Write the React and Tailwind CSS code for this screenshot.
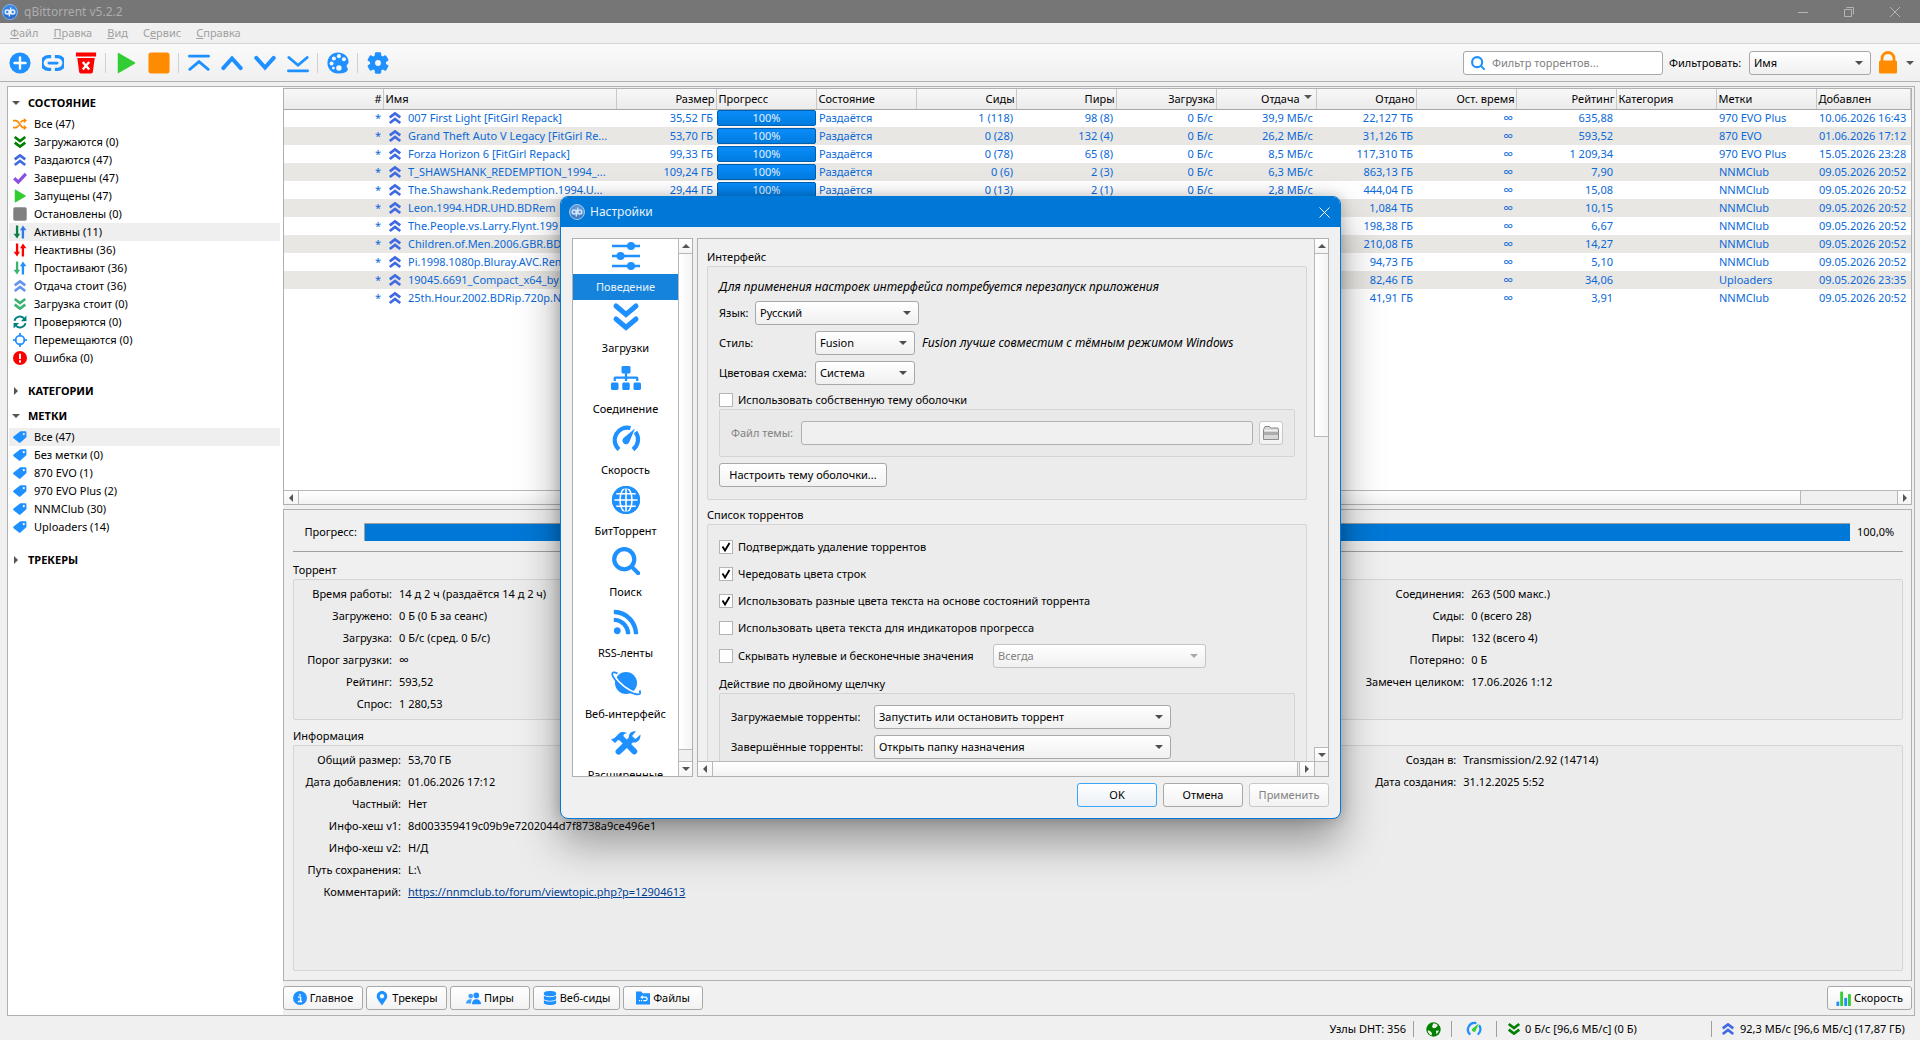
import React from 'react';
import { FaSitemap, FaRss, FaMapMarkerAlt, FaDatabase } from 'react-icons/fa';

const BLUE = '#1e90ff';

/* ---------- icons ---------- */

function Svg({ size = 14, box = 24, className = '', children, ...rest }) {
  return (
    <svg width={size} height={size} viewBox={`0 0 ${box} ${box}`} className={`flex-none ${className}`} fill="none" aria-hidden="true" {...rest}>
      {children}
    </svg>
  );
}

function Logo({ size = 16, pale = false }) {
  return (
    <Svg size={size} box={32}>
      <circle cx="16" cy="16" r="15" fill={pale ? '#5c97da' : '#3b86e0'} stroke={pale ? '#a9c8ec' : '#7fb2ee'} strokeWidth="2" />
      <path d="M3 20a13.5 13.5 0 0 0 26 0c-6 3-18 3-26 0Z" fill={pale ? '#4381c8' : '#2f6fc8'} />
      <g stroke={pale ? '#d3e3f6' : '#e6f0fb'} strokeWidth="2.8">
        <circle cx="10.5" cy="16" r="4" />
        <path d="M14.7 11.5V25" />
        <circle cx="21.5" cy="16" r="4" />
        <path d="M17.4 7v13.5" />
      </g>
    </Svg>
  );
}

const Double = ({ color, down, size = 14 }) => (
  <Svg size={size}>
    <path
      d={down ? 'M3 3.5l9 7 9-7M3 13l9 7 9-7' : 'M3 11l9-7 9 7M3 20.500l9-7 9 7'}
      stroke={color}
      strokeWidth="4.6"
      strokeLinejoin="miter"
    />
  </Svg>
);

const Arrows = ({ down, up }) => (
  <Svg>
    <path d="M5 1h4v14h3L7 23 1 15h4z" fill={down} />
    <path d="M15 23h4V9h4L17 1l-5 8h3z" fill={up} />
  </Svg>
);

const Tag = () => (
  <Svg>
    <path d="M13.500 2H21a2 2 0 0 1 2 2v7.500a2 2 0 0 1-.7 1.500l-9.500 8.300a2 2 0 0 1-2.700 0L1 14a1.800 1.800 0 0 1 0-2.700L12 2.600a2 2 0 0 1 1.500-.6ZM18.500 5a1.900 1.900 0 1 0 0 3.800 1.900 1.900 0 0 0 0-3.800Z" fill={BLUE} fillRule="evenodd" />
  </Svg>
);

const Play = ({ size = 14 }) => (
  <Svg size={size}>
    <path d="M3 1.500v21a.6.6 0 0 0 1 .5l17.500-10.200a.9.9 0 0 0 0-1.600L4 1a.7.7 0 0 0-1 .5Z" fill="#32cd32" />
  </Svg>
);

const Stop = ({ size = 14, color }) => (
  <Svg size={size}>
    <rect x="0.500" y="0.500" width="23" height="23" rx="3" fill={color} />
  </Svg>
);

const Shuffle = () => (
  <Svg>
    <path d="M0 6h5c6 0 7 12 13 12h2M0 18h5c2 0 3.500-1.500 5-4M13 9c1.500-2 3-3 5-3h2" stroke="#ff8c00" strokeWidth="3" />
    <path d="M18.500 1.500 24 6l-5.500 4.500zM18.500 13.500 24 18l-5.500 4.500z" fill="#ff8c00" />
  </Svg>
);

const Check = () => (
  <Svg>
    <path d="M2 12.500l7 6.500L22 5" stroke="#8a4fe0" strokeWidth="5.500" />
  </Svg>
);

const Recheck = () => (
  <Svg>
    <path d="M2.500 10A9.500 9.500 0 0 1 19.500 6.500M21.500 14A9.500 9.500 0 0 1 4.500 17.500" stroke="#008080" strokeWidth="3.200" />
    <path d="M23 1v9.500h-9.500zM1 23v-9.500h9.500z" fill="#008080" />
  </Svg>
);

const Target = () => (
  <Svg>
    <circle cx="12" cy="12" r="7.500" stroke={BLUE} strokeWidth="3" />
    <path d="M12 0v6M12 18v6M0 12h6M18 12h6" stroke={BLUE} strokeWidth="3" />
  </Svg>
);

const ErrorIcon = () => (
  <Svg>
    <circle cx="12" cy="12" r="12" fill="#ff0000" />
    <path d="M12 4.500v9M12 16v3.500" stroke="#fff" strokeWidth="3.400" />
  </Svg>
);

const PlusIcon = () => (
  <Svg size={22}>
    <circle cx="12" cy="12" r="11.500" fill={BLUE} />
    <path d="M12 6v12M6 12h12" stroke="#fff" strokeWidth="2.600" strokeLinecap="round" />
  </Svg>
);

const LinkIcon = () => (
  <Svg size={22}>
    <path d="M10 5H7a7 7 0 0 0 0 14h3M14 5h3a7 7 0 0 1 0 14h-3" stroke={BLUE} strokeWidth="3.600" />
    <path d="M7.500 12h9" stroke={BLUE} strokeWidth="3" strokeLinecap="round" />
  </Svg>
);

const TrashIcon = () => (
  <Svg size={22}>
    <path d="M1 .5h22V5H1zM2.500 6.500h19l-2 15a2 2 0 0 1-2 2h-11a2 2 0 0 1-2-2z" fill="#f00" />
    <path d="M8.500 11l7 8M15.500 11l-7 8" stroke="#fff" strokeWidth="2.600" />
  </Svg>
);

const TopIcon = () => (
  <Svg size={22}>
    <path d="M1.500 4.500h21M2 19l10-8.500L22 19" stroke={BLUE} strokeWidth="3" strokeLinecap="round" />
  </Svg>
);
const UpIcon = () => (
  <Svg size={22}>
    <path d="M2.500 17.500L12 7l9.500 10.500" stroke={BLUE} strokeWidth="4.400" strokeLinecap="round" />
  </Svg>
);
const DownIcon = () => (
  <Svg size={22}>
    <path d="M2.500 6.500L12 17l9.500-10.500" stroke={BLUE} strokeWidth="4.400" strokeLinecap="round" />
  </Svg>
);
const BottomIcon = () => (
  <Svg size={22}>
    <path d="M1.500 20.500h21M2 6l10 8.500L22 6" stroke={BLUE} strokeWidth="3" strokeLinecap="round" />
  </Svg>
);

const PaletteIcon = () => (
  <Svg size={22}>
    <path
      d="M12 .5C5.500.5.500 5.500.500 12S5.500 23.500 12 23.500c4 0 8.500-.3 10.500-3.500 1.200-2-1.500-3-1-5 .3-1.500 2-1.800 2-4C23.500 4.500 18 .5 12 .5Z"
      fill={BLUE}
    />
    <g fill="#f6f6f6">
      <circle cx="5" cy="12.500" r="2.200" />
      <circle cx="7.500" cy="7" r="2.200" />
      <circle cx="13" cy="4.500" r="2.200" />
      <circle cx="18.500" cy="8" r="2.200" />
      <circle cx="13" cy="17.500" r="3" />
      <circle cx="7" cy="17.500" r="1.500" />
    </g>
  </Svg>
);

const GearIcon = () => (
  <Svg size={22}>
    <g fill={BLUE}>
      {[0, 60, 120].map((a) => (
        <rect key={a} x="8.500" y="0.300" width="7" height="23.400" rx="1.500" transform={`rotate(${a} 12 12)`} />
      ))}
      <circle cx="12" cy="12" r="8.800" />
    </g>
    <circle cx="12" cy="12" r="3.200" fill="#f6f6f6" />
  </Svg>
);

const SearchIcon = ({ size }) => (
  <Svg size={size}>
    <circle cx="10.500" cy="10.500" r="8.600" stroke={BLUE} strokeWidth="3.600" />
    <path d="M17 17l5.500 5.500" stroke={BLUE} strokeWidth="3.400" strokeLinecap="round" />
  </Svg>
);

const LockIcon = () => (
  <svg width="18" height="23" viewBox="0 0 18 23" fill="none" className="flex-none" aria-hidden="true">
    <path d="M3 11V7.500a6 6 0 0 1 12 0V11" stroke="#ff8c00" strokeWidth="2.800" />
    <rect y="9.500" width="18" height="13" rx="1.500" fill="#ff8c00" />
  </svg>
);

const SlidersIcon = () => (
  <Svg size={30} box={30}>
    <path d="M1 5h28M1 15h28M1 25h28" stroke={BLUE} strokeWidth="2.400" />
    <circle cx="20" cy="5" r="4" fill={BLUE} />
    <circle cx="9.500" cy="15" r="4" fill={BLUE} />
    <circle cx="20" cy="25" r="4" fill={BLUE} />
  </Svg>
);

const DownloadsIcon = () => (
  <Svg size={30} box={30}>
    <path d="M5 4l10 8.500L25 4M5 17l10 8.500L25 17" stroke={BLUE} strokeWidth="5" strokeLinecap="round" />
  </Svg>
);

const GaugeIcon = ({ size = 30, needle = BLUE }) => (
  <Svg size={size} box={30}>
    <path d="M8 25.500A12.500 12.500 0 0 1 19.500 4M24.500 8A12.500 12.500 0 0 1 22 25.500" stroke={BLUE} strokeWidth="4.200" />
    <path d="M24 4.500l-5.500 13a3.600 3.600 0 1 1-6-3.500z" fill={needle} />
  </Svg>
);

const GlobeIcon = () => (
  <Svg size={30} box={30}>
    <circle cx="15" cy="15" r="14" fill={BLUE} />
    <g stroke="#fff" strokeWidth="1.600">
      <ellipse cx="15" cy="15" rx="6" ry="12" />
      <path d="M15 2.500v25M2.500 15h25M5 8.800h20M5 21.200h20" />
    </g>
    <circle cx="15" cy="15" r="12.800" stroke={BLUE} strokeWidth="2.400" />
  </Svg>
);

const PlanetIcon = () => (
  <Svg size={30} box={30}>
    <circle cx="15" cy="15" r="11" fill={BLUE} />
    <path d="M3 7.500C7 14 15 21.500 27 26" stroke="#fff" strokeWidth="2" />
    <path d="M6.500 5.500C3 3.500.5 4 1.500 7.500 3.500 12.500 13 22.500 24 26c5 1.200 6-.5 4.500-3.500" stroke={BLUE} strokeWidth="1.800" />
  </Svg>
);

const ToolsIcon = () => (
  <Svg size={30} box={30}>
    <path d="M0 10.500l3.500-1.500 5-5C10 2.600 13 2.600 15 3.500l1 .8c-2.500.2-4 1.200-3.500 3l12.800 13a3 3 0 0 1-4.200 4.300L8.800 11.500l-1.800-.5-3 3z" fill={BLUE} />
    <path d="M29.500 5.500l-5 4.500-3.500-3 3.800-4.600c-3.500-.5-7.300 1.600-7 6L5.500 20.500a3 3 0 0 0 4.200 4.300L21.800 13.500c4.400.8 8-2.500 7.700-8z" fill={BLUE} />
  </Svg>
);

const Triangle = ({ dir = 'down', color = '#555555' }) => (
  <svg width="8" height="8" viewBox="0 0 8 8" className="flex-none" aria-hidden="true">
    <path d={{ down: 'M0 2h8L4 6z', up: 'M0 6h8L4 2z', left: 'M6 0v8L2 4z', right: 'M2 0v8l4-4z' }[dir]} fill={color} />
  </svg>
);

const InfoIcon = () => (
  <Svg>
    <circle cx="12" cy="12" r="12" fill={BLUE} />
    <path d="M12 5v3M8.500 10.500H13V18M8.500 18h7" stroke="#fff" strokeWidth="2.400" />
  </Svg>
);

const PeersIcon = () => (
  <Svg size={15}>
    <g fill={BLUE}>
      <circle cx="7.500" cy="8" r="3.800" opacity="0.850" />
      <circle cx="16.500" cy="7" r="4.500" />
      <path d="M0 20c0-4.500 3-7 7-7 1 0 1.800.2 2.500.5C8.500 15 8 17 8 20z" opacity="0.850" />
      <path d="M9.500 21c0-5.500 3-8 7-8s7.500 2.500 7.500 8z" />
    </g>
  </Svg>
);

const FolderIcon = () => (
  <Svg>
    <path d="M0 1h9l2.500 3H24v19H0z" fill={BLUE} />
    <path d="M7 16.500H5M8.500 16.500h2M12.500 16.500H16a3 3 0 0 0 0-6H9.500" stroke="#fff" strokeWidth="2.200" />
    <path d="M11.500 7v7L7.500 10.500z" fill="#fff" />
  </Svg>
);

const BarsIcon = () => (
  <Svg size={15}>
    <path d="M3 24V17" stroke={BLUE} strokeWidth="4.500" />
    <path d="M9 24V1" stroke="#32cd32" strokeWidth="4.500" />
    <path d="M15.500 24V11" stroke={BLUE} strokeWidth="4.500" />
    <path d="M21.500 24V5" stroke="#32cd32" strokeWidth="4.500" />
  </Svg>
);

const EarthIcon = () => (
  <Svg size={15}>
    <circle cx="12" cy="12" r="11.500" fill="#008000" />
    <path d="M11.500 2.500c2.500-.5 5.500.5 7.500 2.500l-3 4-4 1-2.500-2.500zM2.500 13l4 1.500 3 3-.5 4C5.500 20.500 3 17 2.500 13zM16 14l4.500-.5c-.5 2.500-2 4.500-4 6z" fill="#f0f0f0" />
  </Svg>
);

const OpenFolderIcon = () => (
  <svg width="16" height="14" viewBox="0 0 16 14" aria-hidden="true">
    <path d="M.5 13.500V3.500L2 .5h4.500l1 1.500H15l.5 1.500v10z" fill="#d8d8d8" stroke="#8c8c8c" />
    <path d="M1.500 4.500h13" stroke="#f4f4f4" />
    <path d="M1 6h14v3H1z" fill="#acacac" />
  </svg>
);

/* ---------- controls ---------- */

function Select({ id, label, value, className = '', disabled = false }) {
  return (
    <div className={`relative h-6 ${className}`}>
      <select
        id={id}
        aria-label={label}
        disabled={disabled}
        defaultValue={value}
        className="h-6 w-full appearance-none rounded-[3px] border border-[#a8a8a8] bg-linear-to-b from-white to-[#f0f0f0] pr-5 pl-1 text-black disabled:border-[#c4c4c4] disabled:text-[#828282] disabled:opacity-100"
      >
        <option>{value}</option>
      </select>
      <span className="pointer-events-none absolute inset-y-0 right-2 flex items-center">
        <Triangle color={disabled ? '#a8a8a8' : '#4d4d4d'} />
      </span>
    </div>
  );
}

function Checkbox({ id, label, checked = false, className = '' }) {
  return (
    <div className={`flex items-center gap-[5px] ${className}`}>
      <span className="relative flex size-[14px]">
        <input id={id} type="checkbox" defaultChecked={checked} className="peer size-[14px] appearance-none border border-[#b4b4b4] bg-white" />
        <svg viewBox="0 0 14 14" className="pointer-events-none absolute inset-0 hidden peer-checked:block" fill="none" aria-hidden="true">
          <path d="M3.500 6.500l2.500 4L10.500 3" stroke="#000" strokeWidth="1.800" />
        </svg>
      </span>
      <label htmlFor={id}>{label}</label>
    </div>
  );
}

function PushButton({ children, className = '', primary = false, ...rest }) {
  return (
    <button
      type="button"
      className={`flex h-6 items-center justify-center rounded-[3px] border bg-linear-to-b from-white whitespace-nowrap disabled:border-[#c8c8c8] disabled:text-[#828282] ${
        primary ? 'border-[#3ca5f5] to-[#eaf0f6]' : 'border-[#a8a8a8] to-[#f2f2f2]'
      } ${className}`}
      {...rest}
    >
      {children}
    </button>
  );
}

const ScrollButton = ({ dir, className = '' }) => (
  <button type="button" aria-label={`scroll ${dir}`} className={`flex flex-none items-center justify-center border-[#b8b8b8] bg-linear-to-b from-white to-[#f4f4f4] ${className}`}>
    <Triangle dir={dir} />
  </button>
);

/* ---------- sidebar ---------- */

const STATES = [
  [<Shuffle />, 'Все (47)'],
  [<Double down color="#008000" />, 'Загружаются (0)'],
  [<Double color="#4169e1" />, 'Раздаются (47)'],
  [<Check />, 'Завершены (47)'],
  [<Play />, 'Запущены (47)'],
  [<Stop color="#808080" />, 'Остановлены (0)'],
  [<Arrows down="#0b8043" up="#3079e8" />, 'Активны (11)', true],
  [<Arrows down="#ff0000" up="#ff0000" />, 'Неактивны (36)'],
  [<Arrows down="#3cb371" up="#1e90ff" />, 'Простаивают (36)'],
  [<Double color="#6495ed" />, 'Отдача стоит (36)'],
  [<Double down color="#3cb371" />, 'Загрузка стоит (0)'],
  [<Recheck />, 'Проверяются (0)'],
  [<Target />, 'Перемещаются (0)'],
  [<ErrorIcon />, 'Ошибка (0)'],
];

const TAGS = [
  [<Tag />, 'Все (47)', true],
  [<Tag />, 'Без метки (0)'],
  [<Tag />, '870 EVO (1)'],
  [<Tag />, '970 EVO Plus (2)'],
  [<Tag />, 'NNMClub (30)'],
  [<Tag />, 'Uploaders (14)'],
];

function Section({ title, items = [] }) {
  const open = items.length > 0;
  return (
    <section>
      <h2 className="flex h-6 items-center gap-2 pl-1 font-bold">
        <Triangle dir={open ? 'down' : 'right'} />
        {title}
      </h2>
      {open && (
        <ul className="pb-3">
          {items.map(([icon, text, active]) => (
            <li key={text} className={`ml-px flex h-[18px] items-center gap-[7px] pl-1 ${active ? 'bg-[#efefef]' : ''}`}>
              {icon}
              <span>{text}</span>
            </li>
          ))}
        </ul>
      )}
    </section>
  );
}

/* ---------- torrent table ---------- */

const COLUMNS = [
  ['#', 'w-[99px]', 'r'],
  ['Имя', 'w-[233px]', 'l'],
  ['Размер', 'w-[100px]', 'r'],
  ['Прогресс', 'w-[100px]', 'l'],
  ['Состояние', 'w-[100px]', 'l'],
  ['Сиды', 'w-[100px]', 'r'],
  ['Пиры', 'w-[100px]', 'r'],
  ['Загрузка', 'w-[100px]', 'r'],
  ['Отдача', 'w-[100px]', 'r'],
  ['Отдано', 'w-[100px]', 'r'],
  ['Ост. время', 'w-[100px]', 'r'],
  ['Рейтинг', 'w-[100px]', 'r'],
  ['Категория', 'w-[100px]', 'l'],
  ['Метки', 'w-[100px]', 'l'],
  ['Добавлен', 'w-auto', 'l'],
];

const TORRENTS = [
  ['007 First Light [FitGirl Repack]', '35,52 ГБ', '1 (118)', '98 (8)', '0 Б/с', '39,9 МБ/с', '22,127 ТБ', '635,88', '970 EVO Plus', '10.06.2026 16:43'],
  ['Grand Theft Auto V Legacy [FitGirl Re...', '53,70 ГБ', '0 (28)', '132 (4)', '0 Б/с', '26,2 МБ/с', '31,126 ТБ', '593,52', '870 EVO', '01.06.2026 17:12'],
  ['Forza Horizon 6 [FitGirl Repack]', '99,33 ГБ', '0 (78)', '65 (8)', '0 Б/с', '8,5 МБ/с', '117,310 ТБ', '1 209,34', '970 EVO Plus', '15.05.2026 23:28'],
  ['T_SHAWSHANK_REDEMPTION_1994_...', '109,24 ГБ', '0 (6)', '2 (3)', '0 Б/с', '6,3 МБ/с', '863,13 ГБ', '7,90', 'NNMClub', '09.05.2026 20:52'],
  ['The.Shawshank.Redemption.1994.U...', '29,44 ГБ', '0 (13)', '2 (1)', '0 Б/с', '2,8 МБ/с', '444,04 ГБ', '15,08', 'NNMClub', '09.05.2026 20:52'],
  ['Leon.1994.HDR.UHD.BDRem', '', '', '', '', '', '1,084 ТБ', '10,15', 'NNMClub', '09.05.2026 20:52'],
  ['The.People.vs.Larry.Flynt.199', '', '', '', '', '', '198,38 ГБ', '6,67', 'NNMClub', '09.05.2026 20:52'],
  ['Children.of.Men.2006.GBR.BD', '', '', '', '', '', '210,08 ГБ', '14,27', 'NNMClub', '09.05.2026 20:52'],
  ['Pi.1998.1080p.Bluray.AVC.Rem', '', '', '', '', '', '94,73 ГБ', '5,10', 'NNMClub', '09.05.2026 20:52'],
  ['19045.6691_Compact_x64_by', '', '', '', '', '', '82,46 ГБ', '34,06', 'Uploaders', '09.05.2026 23:35'],
  ['25th.Hour.2002.BDRip.720p.N', '', '', '', '', '', '41,91 ГБ', '3,91', 'NNMClub', '09.05.2026 20:52'],
];

function TorrentTable() {
  return (
    <div className="flex min-h-0 flex-[415_1_0%] flex-col border border-[#b0b0b0] bg-white">
      <div className="min-h-0 flex-1 overflow-hidden">
        <table className="w-full table-fixed border-collapse whitespace-nowrap">
          <thead>
            <tr className="h-5 bg-linear-to-b from-[#f8f8f8] to-[#ebebeb]">
              {COLUMNS.map(([name, width, align]) => (
                <th
                  key={name}
                  className={`${width} border-r border-b border-r-[#c8c8c8] border-b-[#a8a8a8] p-0 font-normal ${align === 'r' ? 'pr-px text-right' : 'pl-[2px] text-left'}`}
                >
                  {name === 'Отдача' ? (
                    <span className="flex justify-end gap-1 pr-[3px]">
                      {name}
                      <span className="pt-0.5">
                        <Triangle />
                      </span>
                    </span>
                  ) : (
                    name
                  )}
                </th>
              ))}
            </tr>
          </thead>
          <tbody className="text-[#0969da]">
            {TORRENTS.map(([name, size, seeds, peers, down, up, sent, ratio, tag, added], i) => (
              <tr key={name} className="h-[18px] even:bg-[#e9e7e3]">
                <td className="p-0 pr-[2px] text-right">*</td>
                <td className="overflow-hidden p-0 pl-[5px]">
                  <span className="flex items-center gap-[6px]">
                    <Double color="#4169e1" />
                    {name}
                  </span>
                </td>
                <td className="p-0 pr-[3px] text-right">{size}</td>
                <td className="p-0 pl-px">
                  {i < 5 && (
                    <span className="flex h-4 items-center justify-center rounded-[2px] border border-[#005fae] bg-linear-to-b from-[#0a8cfa] to-[#007ce0] text-[#e4eefa]">100%</span>
                  )}
                </td>
                <td className="p-0 pl-[3px]">{i < 5 && 'Раздаётся'}</td>
                <td className="p-0 pr-[3px] text-right">{seeds}</td>
                <td className="p-0 pr-[3px] text-right">{peers}</td>
                <td className="p-0 pr-[3px] text-right">{down}</td>
                <td className="p-0 pr-[3px] text-right">{up}</td>
                <td className="p-0 pr-[3px] text-right">{sent}</td>
                <td className="p-0 pr-[3px] text-right text-sm leading-4">∞</td>
                <td className="p-0 pr-[3px] text-right">{ratio}</td>
                <td className="p-0" />
                <td className="p-0 pl-[3px]">{tag}</td>
                <td className="p-0 pl-[3px]">{added}</td>
              </tr>
            ))}
          </tbody>
        </table>
      </div>
      <div className="flex h-[14px] border-t border-[#b8b8b8] bg-[#f0f0f0]">
        <ScrollButton dir="left" className="w-[15px] border-r" />
        <div className="mr-24 flex-1 border-r border-[#b8b8b8] bg-linear-to-b from-white to-[#f2f2f2]" />
        <ScrollButton dir="right" className="w-[14px] border-l" />
      </div>
    </div>
  );
}

/* ---------- torrent details ---------- */

const Fields = ({ rows, labelWidth }) => (
  <dl className="flex flex-col">
    {rows.map(([label, value, href]) => (
      <div key={label} className="flex h-[22px] items-center gap-[7px] whitespace-nowrap">
        <dt className={`${labelWidth} text-right`}>{label}</dt>
        <dd className={value === '∞' ? 'text-sm leading-4' : ''}>
          {href ? (
            <a href={value} className="text-[#003e92] underline">
              {value}
            </a>
          ) : (
            value
          )}
        </dd>
      </div>
    ))}
  </dl>
);

function Details() {
  return (
    <div className="flex min-h-0 flex-[461_1_0%] flex-col border border-[#b0b0b0] pr-2 pb-[9px] pl-[9px]">
      <div className="mt-[13px] flex h-[18px] flex-none items-center">
        <span id="progress-label" className="w-[71px] pr-[7px] text-right">
          Прогресс:
        </span>
        <div role="progressbar" aria-labelledby="progress-label" aria-valuenow={100} className="h-full flex-1 border-t border-l border-[#a0a0a0] bg-[#0078d7]" />
        <span className="w-[53px] pl-[7px]">100,0%</span>
      </div>
      <hr className="mt-[10px] border-t border-[#a0a0a0]" />
      <h3 className="mt-[9px] h-[18px] flex-none leading-[18px]">Торрент</h3>
      <div className="grid flex-none grid-cols-3 rounded-[2px] border border-[#d4d4d4] bg-[#ececec] px-[11px] pt-[3px] pb-1">
        <Fields
          labelWidth="w-[87px]"
          rows={[
            ['Время работы:', '14 д 2 ч (раздаётся 14 д 2 ч)'],
            ['Загружено:', '0 Б (0 Б за сеанс)'],
            ['Загрузка:', '0 Б/с (сред. 0 Б/с)'],
            ['Порог загрузки:', '∞'],
            ['Рейтинг:', '593,52'],
            ['Спрос:', '1 280,53'],
          ]}
        />
        <div />
        <Fields
          labelWidth="w-[102px]"
          rows={[
            ['Соединения:', '263 (500 макс.)'],
            ['Сиды:', '0 (всего 28)'],
            ['Пиры:', '132 (всего 4)'],
            ['Потеряно:', '0 Б'],
            ['Замечен целиком:', '17.06.2026 1:12'],
          ]}
        />
      </div>
      <h3 className="mt-[7px] h-[18px] flex-none leading-[18px]">Информация</h3>
      <div className="grid min-h-0 flex-1 grid-cols-3 rounded-[2px] border border-[#d4d4d4] bg-[#ececec] px-[11px] pt-[3px]">
        <Fields
          labelWidth="w-[96px]"
          rows={[
            ['Общий размер:', '53,70 ГБ'],
            ['Дата добавления:', '01.06.2026 17:12'],
            ['Частный:', 'Нет'],
            ['Инфо-хеш v1:', '8d003359419c09b9e7202044d7f8738a9ce496e1'],
            ['Инфо-хеш v2:', 'Н/Д'],
            ['Путь сохранения:', 'L:\\'],
            ['Комментарий:', 'https://nnmclub.to/forum/viewtopic.php?p=12904613', true],
          ]}
        />
        <div />
        <Fields
          labelWidth="w-[94px]"
          rows={[
            ['Создан в:', 'Transmission/2.92 (14714)'],
            ['Дата создания:', '31.12.2025 5:52'],
          ]}
        />
      </div>
    </div>
  );
}

/* ---------- settings dialog ---------- */

const PAGES = [
  ['Поведение', <SlidersIcon />],
  ['Загрузки', <DownloadsIcon />],
  ['Соединение', <FaSitemap size={30} color={BLUE} />],
  ['Скорость', <GaugeIcon />],
  ['БитТоррент', <GlobeIcon />],
  ['Поиск', <SearchIcon size={28} />],
  ['RSS-ленты', <FaRss size={28} color={BLUE} />],
  ['Веб-интерфейс', <PlanetIcon />],
  ['Расширенные', <ToolsIcon />],
];

function SettingsDialog() {
  return (
    <div
      role="dialog"
      aria-label="Настройки"
      className="absolute top-[196px] left-[560px] flex w-[781px] flex-col overflow-hidden rounded-lg border border-[#0078d7] bg-[#f0f0f0] shadow-[0_24px_44px_rgba(0,0,0,0.36),0_0_14px_rgba(0,0,0,0.22)]"
    >
      <header className="flex h-[30px] items-center gap-[5px] bg-[#0078d7] pr-[10px] pl-2 text-[#e8f2fb]">
        <Logo pale />
        <h2 className="flex-1 text-xs">Настройки</h2>
        <button type="button" aria-label="Закрыть" className="flex">
          <Svg size={11} box={11}>
            <path d="M.5.5l10 10M10.500.5l-10 10" stroke="#fff" strokeWidth="1" />
          </Svg>
        </button>
      </header>

      <div className="flex h-[550px] gap-1 px-[11px] pt-[11px]">
        <nav className="flex w-[121px] flex-none overflow-hidden border border-[#b0b0b0] bg-white">
          <ul className="flex flex-1 flex-col pt-px">
            {PAGES.map(([name, icon], i) => (
              <li key={name}>
                <button type="button" className="flex h-[61px] w-full flex-col items-center gap-0.5 pb-px">
                  <span className="flex h-8 items-center">{icon}</span>
                  <span className={`flex h-[26px] w-full items-center justify-center ${i === 0 ? 'bg-[#1583dc] text-[#e8f2fb]' : ''}`}>{name}</span>
                </button>
              </li>
            ))}
          </ul>
          <div className="flex w-[14px] flex-col border-l border-[#b8b8b8] bg-[#f0f0f0]">
            <ScrollButton dir="up" className="h-[15px] border-b" />
            <div className="mb-[11px] flex-1 border-b border-[#b8b8b8] bg-linear-to-r from-white to-[#f4f4f4]" />
            <ScrollButton dir="down" className="h-[15px] border-t" />
          </div>
        </nav>

        <div className="flex min-w-0 flex-1 flex-col border border-[#b0b0b0]">
          <div className="flex min-h-0 flex-1">
            <div className="min-w-0 flex-1 overflow-hidden pt-[9px] pr-[7px] pl-[9px]">
              <h3 className="h-[18px] leading-[18px]">Интерфейс</h3>
              <div className="rounded-[2px] border border-[#d4d4d4] bg-[#ececec] pt-[11px] pr-[11px] pb-3 pl-[11px]">
                <p className="mb-[5px] h-[18px] text-xs leading-[18px] italic">Для применения настроек интерфейса потребуется перезапуск приложения</p>
                <div className="flex flex-col gap-[6px]">
                  <div className="flex items-center">
                    <label htmlFor="lang" className="w-9">
                      Язык:
                    </label>
                    <Select id="lang" value="Русский" className="w-[164px]" />
                  </div>
                  <div className="flex items-center">
                    <label htmlFor="style" className="w-24">
                      Стиль:
                    </label>
                    <Select id="style" value="Fusion" className="w-[100px]" />
                    <span className="pl-[7px] text-xs italic">Fusion лучше совместим с тёмным режимом Windows</span>
                  </div>
                  <div className="flex items-center">
                    <label htmlFor="scheme" className="w-24">
                      Цветовая схема:
                    </label>
                    <Select id="scheme" value="Система" className="w-[100px]" />
                  </div>
                </div>
                <Checkbox id="custom-theme" label="Использовать собственную тему оболочки" className="mt-[6px] h-[18px]" />
                <div className="flex items-center gap-[6px] rounded-[2px] border border-[#d4d4d4] bg-[#e9e9e9] px-[11px] py-[11px]">
                  <label htmlFor="theme-file" className="w-16 text-[#828282]">
                    Файл темы:
                  </label>
                  <input id="theme-file" type="text" disabled className="h-6 min-w-0 flex-1 rounded-[3px] border border-[#b0b0b0] bg-[#f0f0f0] px-1" />
                  <PushButton aria-label="Выбрать файл" disabled className="w-6">
                    <OpenFolderIcon />
                  </PushButton>
                </div>
                <PushButton className="mt-[6px] w-[168px]">Настроить тему оболочки...</PushButton>
              </div>

              <h3 className="mt-[6px] h-[18px] leading-[18px]">Список торрентов</h3>
              <div className="rounded-[2px] border border-[#d4d4d4] bg-[#ececec] pt-2 pr-[11px] pb-3 pl-[11px]">
                <Checkbox id="confirm" checked label="Подтверждать удаление торрентов" className="h-[27px]" />
                <Checkbox id="alternate" checked label="Чередовать цвета строк" className="h-[27px]" />
                <Checkbox id="state-colors" checked label="Использовать разные цвета текста на основе состояний торрента" className="h-[27px]" />
                <Checkbox id="bar-colors" label="Использовать цвета текста для индикаторов прогресса" className="h-[27px]" />
                <div className="mt-[3px] flex items-center">
                  <Checkbox id="hide-zero" label="Скрывать нулевые и бесконечные значения" className="w-[274px]" />
                  <Select id="hide-mode" label="Скрывать значения" value="Всегда" disabled className="w-[213px]" />
                </div>
                <h4 className="mt-[7px] h-[18px] leading-[18px]">Действие по двойному щелчку</h4>
                <div className="flex flex-col gap-[6px] rounded-[2px] border border-[#d4d4d4] bg-[#e9e9e9] px-[11px] py-[11px]">
                  <div className="flex items-center">
                    <label htmlFor="dbl-down" className="w-[143px]">
                      Загружаемые торренты:
                    </label>
                    <Select id="dbl-down" value="Запустить или остановить торрент" className="w-[297px]" />
                  </div>
                  <div className="flex items-center">
                    <label htmlFor="dbl-done" className="w-[143px]">
                      Завершённые торренты:
                    </label>
                    <Select id="dbl-done" value="Открыть папку назначения" className="w-[297px]" />
                  </div>
                </div>
              </div>
            </div>
            <div className="flex w-[14px] flex-none flex-col">
              <ScrollButton dir="up" className="h-[15px] border-b border-l" />
              <div className="h-[183px] border-b border-l border-[#b8b8b8] bg-linear-to-r from-white to-[#f4f4f4]" />
              <div className="flex-1" />
              <ScrollButton dir="down" className="h-[14px] border-t border-l" />
            </div>
          </div>
          <div className="flex h-[15px] flex-none border-t border-[#b8b8b8]">
            <ScrollButton dir="left" className="w-[15px] border-r" />
            <div className="flex-1 border-r border-[#b8b8b8] bg-linear-to-b from-white to-[#f2f2f2]" />
            <ScrollButton dir="right" className="ml-px w-[15px] border-l" />
            <div className="w-[14px] border-l border-[#b8b8b8]" />
          </div>
        </div>
      </div>

      <footer className="flex justify-end gap-[6px] px-[11px] pt-[6px] pb-[11px]">
        <PushButton primary className="w-20">OK</PushButton>
        <PushButton className="w-20">Отмена</PushButton>
        <PushButton className="w-20" disabled>
          Применить
        </PushButton>
      </footer>
    </div>
  );
}

/* ---------- main window ---------- */

const MENU = [
  ['', 'Ф', 'айл'],
  ['', 'П', 'равка'],
  ['', 'В', 'ид'],
  ['С', 'е', 'рвис'],
  ['', 'С', 'правка'],
];

const ToolButton = ({ label, children }) => (
  <button type="button" aria-label={label} className="flex h-8 w-[33px] items-center justify-center">
    {children}
  </button>
);

const ToolSep = () => <span className="mx-[3px] h-5 w-px bg-[#d0d0d0]" />;

const StatusSep = ({ className = '' }) => <span className={`h-4 w-px bg-[#a0a0a0] ${className}`} />;

export default function App() {
  return (
    <div className="relative flex h-screen flex-col overflow-hidden bg-[#f0f0f0] font-['Noto_Sans','Open_Sans',sans-serif] text-[11px] leading-4 text-black">
      <header className="flex h-[23px] flex-none items-center bg-[#767676] pl-[2px] text-[#adadad]">
        <Logo />
        <h1 className="flex-1 pl-[6px] text-xs">qBittorrent v5.2.2</h1>
        <div className="flex items-center gap-9 pr-5">
          <button type="button" aria-label="Свернуть" className="flex">
            <Svg size={10} box={10}>
              <path d="M0 5.500h10" stroke="#b4b4b4" />
            </Svg>
          </button>
          <button type="button" aria-label="Восстановить" className="flex">
            <Svg size={10} box={10}>
              <path d="M.5 2.500h7v7h-7zM2.500.5h7v7" stroke="#b4b4b4" />
            </Svg>
          </button>
          <button type="button" aria-label="Закрыть окно" className="flex">
            <Svg size={10} box={10}>
              <path d="M0 0l10 10M10 0L0 10" stroke="#b4b4b4" />
            </Svg>
          </button>
        </div>
      </header>

      <nav className="flex h-[21px] flex-none items-center gap-[15px] border-b border-[#d5d5d5] pl-[10px] text-[#a0a0a0]">
        {MENU.map(([before, key, after]) => (
          <button key={after} type="button">
            {before}
            <u>{key}</u>
            {after}
          </button>
        ))}
      </nav>

      <div className="flex h-[38px] flex-none items-center border-b border-[#b0b0b0] bg-linear-to-b from-[#fafafa] to-[#f0f0f0] pl-[3px]">
        <ToolButton label="Добавить торрент"><PlusIcon /></ToolButton>
        <ToolButton label="Добавить ссылку"><LinkIcon /></ToolButton>
        <ToolButton label="Удалить"><TrashIcon /></ToolButton>
        <ToolSep />
        <ToolButton label="Запустить"><Play size={22} /></ToolButton>
        <ToolButton label="Остановить"><Stop size={22} color="#ff8c00" /></ToolButton>
        <ToolSep />
        <ToolButton label="В начало"><TopIcon /></ToolButton>
        <ToolButton label="Вверх"><UpIcon /></ToolButton>
        <ToolButton label="Вниз"><DownIcon /></ToolButton>
        <ToolButton label="В конец"><BottomIcon /></ToolButton>
        <ToolSep />
        <ToolButton label="Тема"><PaletteIcon /></ToolButton>
        <ToolSep />
        <ToolButton label="Параметры"><GearIcon /></ToolButton>

        <div className="ml-auto flex items-center pr-[6px]">
          <label className="flex h-6 w-[200px] items-center gap-[7px] rounded-[3px] border border-[#a8a8a8] bg-white pl-[7px]">
            <SearchIcon size={14} />
            <input type="search" aria-label="Фильтр торрентов" placeholder="Фильтр торрентов..." className="min-w-0 flex-1 bg-transparent outline-none placeholder:text-[#808080]" />
          </label>
          <label htmlFor="filter-by" className="w-[86px] pl-[6px]">
            Фильтровать:
          </label>
          <Select id="filter-by" value="Имя" className="w-[122px]" />
          <button type="button" aria-label="Заблокировать" className="flex items-center gap-[9px] pl-2">
            <LockIcon />
            <Triangle />
          </button>
        </div>
      </div>

      <main className="mt-1 mr-[5px] ml-[7px] flex min-h-0 flex-1 border border-[#b0b0b0]">
        <aside className="w-[275px] flex-none bg-white pt-1 pr-[3px]">
          <Section title="СОСТОЯНИЕ" items={STATES} />
          <Section title="КАТЕГОРИИ" />
          <div className="h-px" />
          <Section title="МЕТКИ" items={TAGS} />
          <Section title="ТРЕКЕРЫ" />
        </aside>

        <div className="flex min-w-0 flex-1 flex-col pt-px pr-[2px]">
          <TorrentTable />
          <div className="h-1 flex-none" />
          <Details />
          <div className="flex flex-none gap-[3px] py-[5px]">
            <PushButton className="w-20 gap-[3px]"><InfoIcon />Главное</PushButton>
            <PushButton className="w-[81px] gap-[3px]"><FaMapMarkerAlt size={14} color={BLUE} />Трекеры</PushButton>
            <PushButton className="w-20 gap-[3px]"><PeersIcon />Пиры</PushButton>
            <PushButton className="w-[87px] gap-[3px]"><FaDatabase size={14} color={BLUE} />Веб-сиды</PushButton>
            <PushButton className="w-20 gap-[3px]"><FolderIcon />Файлы</PushButton>
            <PushButton className="ml-auto w-[85px] gap-[3px]"><BarsIcon />Скорость</PushButton>
          </div>
        </div>
      </main>

      <footer className="flex h-6 flex-none items-center justify-end pt-0.5 pr-[10px] whitespace-nowrap">
        <span className="pr-[7px]">Узлы DHT: 356</span>
        <StatusSep className="mr-3" />
        <EarthIcon />
        <StatusSep className="mr-[14px] ml-[10px]" />
        <GaugeIcon size={16} needle="#32cd32" />
        <StatusSep className="mr-[10px] ml-[14px]" />
        <span className="flex w-[204px] items-center gap-1">
          <Double down color="#008000" />
          0 Б/с [96,6 МБ/с] (0 Б)
        </span>
        <StatusSep className="mr-[9px]" />
        <span className="flex w-[189px] items-center gap-[5px]">
          <Double color="#4169e1" />
          92,3 МБ/с [96,6 МБ/с] (17,87 ГБ)
        </span>
      </footer>

      <SettingsDialog />
    </div>
  );
}
